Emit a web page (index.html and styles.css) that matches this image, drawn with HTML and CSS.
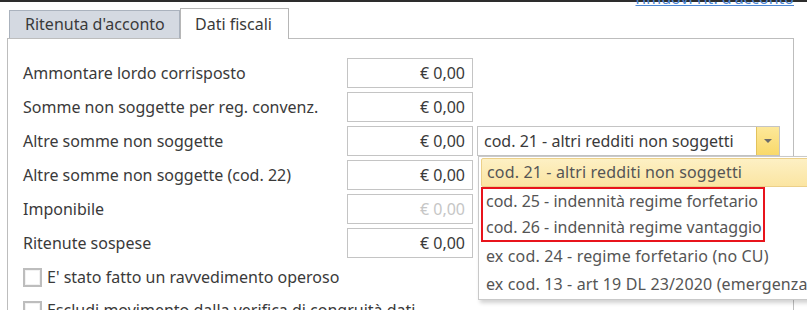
FILE: index.html
```html
<!DOCTYPE html>
<html lang="it">
<head>
    <meta charset="UTF-8">
    <meta name="viewport" content="width=device-width, initial-scale=1.0">
    <title>Dati fiscali</title>
    <link rel="stylesheet" href="styles.css">
</head>
<body>
    <div class="topbar"></div>
    <div class="link-row"><a href="#" class="remove-link">rimuovi rit. d'acconto</a></div>

    <div class="tabs">
        <div class="tab">Ritenuta d'acconto</div>
        <div class="tab active">Dati fiscali</div>
    </div>

    <div class="panel">
        <div class="row">
            <span class="label">Ammontare lordo corrisposto</span>
            <div class="money">€ 0,00</div>
        </div>
        <div class="row">
            <span class="label">Somme non soggette per reg. convenz.</span>
            <div class="money">€ 0,00</div>
        </div>
        <div class="row">
            <span class="label">Altre somme non soggette</span>
            <div class="money">€ 0,00</div>
            <div class="combo">
                <span class="combo-text">cod. 21 - altri redditi non soggetti</span>
                <span class="combo-btn"><span class="arrow"></span></span>

                <div class="dropdown">
                    <div class="item selected">cod. 21 - altri redditi non soggetti</div>
                    <div class="marked">
                        <div class="item small">cod. 25 - indennità regime forfetario</div>
                        <div class="item small">cod. 26 - indennità regime vantaggio</div>
                    </div>
                    <div class="item">ex cod. 24 - regime forfetario (no CU)</div>
                    <div class="item">ex cod. 13 - art 19 DL 23/2020 (emergenza COVID-19)</div>
                </div>
            </div>
        </div>
        <div class="row">
            <span class="label">Altre somme non soggette (cod. 22)</span>
            <div class="money">€ 0,00</div>
        </div>
        <div class="row">
            <span class="label">Imponibile</span>
            <div class="money disabled">€ 0,00</div>
        </div>
        <div class="row">
            <span class="label">Ritenute sospese</span>
            <div class="money">€ 0,00</div>
        </div>
        <label class="check-row"><span class="box"></span>E' stato fatto un ravvedimento operoso</label>
        <label class="check-row"><span class="box"></span>Escludi movimento dalla verifica di congruità dati</label>
    </div>
</body>
</html>
```

FILE: styles.css
```css
body {
    margin: 0;
    background: #fff;
    font-family: "Noto Sans", "DejaVu Sans", sans-serif;
    font-size: 16px;
    color: #3a3a3a;
    height: 310px;
    overflow: hidden;
}
.topbar {
    height: 2px;
    background-color: #2d2d2d;
}
.link-row {
    height: 5px;
    text-align: right;
    padding-right: 13px;
    line-height: 16px;
}
.remove-link {
    position: relative;
    top: -12px;
    color: #4b86d4;
    font-size: 16px;
}
.tabs {
    display: flex;
    align-items: flex-end;
    margin-left: 9px;
    height: 31px;
}
.tab {
    height: 28px;
    line-height: 27px;
    padding: 0 14px 0 15px;
    background-color: #d4d9e1;
    border: 1px solid #aab2bd;
    border-bottom: none;
    box-sizing: border-box;
    width: 171px;
}
.tab.active {
    height: 31px;
    width: 109px;
    line-height: 30px;
    background-color: #fff;
    border-color: #b6b6b6;
    padding-left: 14px;
    margin-bottom: -1px;
    position: relative;
    z-index: 1;
}
.panel {
    margin-left: 7px;
    width: 787px;
    height: 300px;
    border: 1px solid #bdbdbd;
    border-bottom: none;
    padding-top: 17px;
    padding-left: 15px;
    box-sizing: border-box;
}
.row {
    display: flex;
    align-items: center;
    height: 34px;
}
.label {
    width: 324px;
}
.money {
    width: 126px;
    height: 30px;
    line-height: 28px;
    border: 1px solid #c4c4c4;
    box-sizing: border-box;
    text-align: right;
    padding-right: 7px;
}
.money.disabled {
    color: #c6c6c6;
}
.combo {
    position: relative;
    display: flex;
    margin-left: 4px;
    width: 303px;
    height: 30px;
    border: 1px solid #c4c4c4;
    box-sizing: border-box;
}
.combo-text {
    flex: 1;
    line-height: 28px;
    padding-left: 6px;
}
.combo-btn {
    width: 22px;
    display: flex;
    align-items: center;
    justify-content: center;
    background: linear-gradient(#fde89a, #f9d96a);
    border-left: 1px solid #e2c25c;
}
.arrow {
    width: 0;
    height: 0;
    border-left: 4px solid transparent;
    border-right: 4px solid transparent;
    border-top: 4px solid #6b6b6b;
}
.dropdown {
    position: absolute;
    top: 29px;
    left: 0;
    width: 345px;
    padding: 1px 0 1px 2px;
    background: #fff;
    border: 1px solid #c9c9c9;
    box-shadow: 2px 3px 4px rgba(0, 0, 0, 0.18);
    color: #555;
    z-index: 5;
}
.item {
    height: 28px;
    line-height: 28px;
    padding-left: 5px;
    white-space: nowrap;
    letter-spacing: 0.15px;
}
.item.selected {
    height: 29px;
    line-height: 27px;
    background: linear-gradient(#fdf0c4, #fbe5a2);
    border: 1px solid #ecd089;
    border-radius: 2px;
    box-sizing: border-box;
    padding-left: 5px;
}
.marked {
    width: 284px;
    border: 2px solid #e8141c;
    box-sizing: border-box;
}
.item.small {
    height: 25.5px;
    line-height: 25.5px;
    padding-left: 3px;
    letter-spacing: 0;
}
.check-row {
    display: flex;
    align-items: center;
    gap: 5px;
    height: 32px;
    padding-top: 1px;
}
.box {
    width: 15px;
    height: 15px;
    border: 2px solid #bdbdbd;
    box-shadow: inset 0 0 0 1px #f2f2f2;
    background: #fff;
}
```
